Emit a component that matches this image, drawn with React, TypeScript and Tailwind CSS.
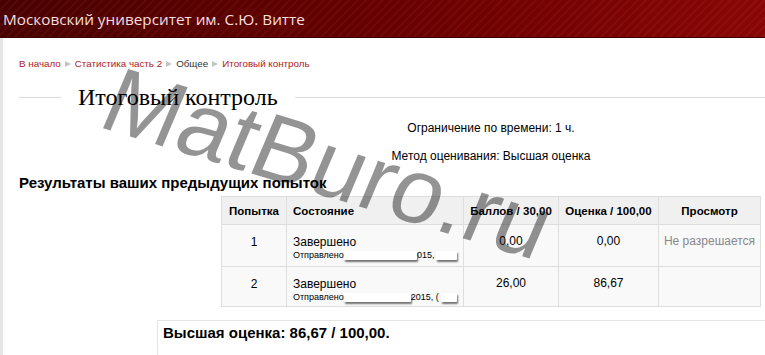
import React from "react";

// ---------------------------------------------------------------------------
// Small pieces
// ---------------------------------------------------------------------------
function Sep() {
  return (
    <span className="mx-[4px] inline-block h-0 w-0 border-y-[3.5px] border-l-[6px] border-y-transparent border-l-[#c4c4c4] align-middle" />
  );
}

function Redact({ w }: { w: number }) {
  return (
    <span
      className="inline-block h-[9px] rounded-[1px] bg-white align-middle shadow-[1px_2px_2px_rgba(0,0,0,0.55)]"
      style={{ width: w }}
    />
  );
}

interface Attempt {
  n: number;
  mid: string;
  w1: number;
  w2: number;
  points: string;
  grade: string;
  review: string;
}

const attempts: Attempt[] = [
  { n: 1, mid: "015,", w1: 78, w2: 22, points: "0,00", grade: "0,00", review: "Не разрешается" },
  { n: 2, mid: "2015, (", w1: 74, w2: 18, points: "26,00", grade: "86,67", review: "" },
];

// ---------------------------------------------------------------------------
// Page
// ---------------------------------------------------------------------------
export default function App() {
  return (
    <div className="relative h-[355px] w-[765px] overflow-hidden bg-white font-['Liberation_Sans',Arial,sans-serif] text-black">
      {/* Header */}
      <div className="relative h-[38px] border-b border-[#3a0000] bg-gradient-to-r from-[#4a0000] via-[#680000] to-[#8a0606]">
        <div className="absolute inset-0 bg-[repeating-linear-gradient(135deg,rgba(255,255,255,0.035)_0px,rgba(255,255,255,0.035)_2px,transparent_2px,transparent_6px)]" />
        <div className="relative pl-[3px] pt-[9px] font-['Open_Sans',sans-serif] text-[15.3px] leading-[20px] text-[#f4dede]">
          Московский университет им. С.Ю. Витте
        </div>
      </div>

      {/* Body */}
      <div className="h-[317px] border-l-[3px] border-[#e6e6e6]">
        {/* Breadcrumb */}
        <div className="pl-[16px] pt-[19px] text-[9.8px] leading-[14px]">
          <span className="text-[#b02020]">В начало</span>
          <Sep />
          <span className="text-[#b02020]">Статистика часть 2</span>
          <Sep />
          <span className="text-[#333]">Общее</span>
          <Sep />
          <span className="text-[#b02020]">Итоговый контроль</span>
        </div>

        {/* Title */}
        <div className="mt-[12px] flex items-center pl-[16px]">
          <div className="h-px w-[42px] bg-[#dcdcdc]" />
          <h2 className="px-[17px] font-['Liberation_Serif',serif] text-[24px] leading-[28px]">
            Итоговый контроль
          </h2>
          <div className="h-px flex-1 bg-[#dcdcdc]" />
        </div>

        {/* Quiz info */}
        <div className="ml-[219px] w-[538px] text-center text-[12px] leading-[14px]">
          <p className="mt-[10px]">Ограничение по времени: 1 ч.</p>
          <p className="mt-[14px]">Метод оценивания: Высшая оценка</p>
        </div>

        {/* Previous attempts */}
        <h3 className="mt-[11px] pl-[16px] text-[15px] font-bold leading-[18px]">
          Результаты ваших предыдущих попыток
        </h3>

        <table className="ml-[218px] mt-[4px] w-[539px] table-fixed border-collapse text-[12px] leading-[14px]">
          <colgroup>
            <col className="w-[65px]" />
            <col className="w-[177px]" />
            <col className="w-[95px]" />
            <col className="w-[100px]" />
            <col className="w-[102px]" />
          </colgroup>
          <thead>
            <tr className="h-[28px] whitespace-nowrap bg-[#f0f0f0] text-[11.5px] font-bold">
              <th className="border border-[#dedede] px-[2px] text-center">Попытка</th>
              <th className="border border-[#dedede] px-[6px] text-left">Состояние</th>
              <th className="border border-[#dedede] px-[2px] text-center">Баллов / 30,00</th>
              <th className="border border-[#dedede] px-[2px] text-center">Оценка / 100,00</th>
              <th className="border border-[#dedede] px-[2px] text-center">Просмотр</th>
            </tr>
          </thead>
          <tbody>
            {attempts.map((a) => (
              <tr key={a.n} className={`${a.n === 1 ? "h-[42px]" : "h-[40px]"} bg-[#f9f9f9] align-top`}>
                <td className="border border-[#dedede] pt-[10px] text-center">{a.n}</td>
                <td className="border border-[#dedede] px-[6px] pt-[10px]">
                  <div>Завершено</div>
                  <div className="flex items-center whitespace-nowrap text-[9px] leading-[12px]">
                    <span>Отправлено</span>
                    <Redact w={a.w1} />
                    <span>{a.mid}</span>
                    <span className="ml-[2px]" />
                    <Redact w={a.w2} />
                  </div>
                </td>
                <td className="border border-[#dedede] pt-[9px] text-center">{a.points}</td>
                <td className="border border-[#dedede] pt-[9px] text-center">{a.grade}</td>
                <td className="whitespace-nowrap border border-[#dedede] pt-[9px] text-center text-[#888]">{a.review}</td>
              </tr>
            ))}
          </tbody>
        </table>

        {/* Feedback */}
        <div className="ml-[154px] mt-[13px] h-[40px] border-l border-t border-[#e4e4e4] pl-[5px] pt-[3px]">
          <p className="text-[15px] font-bold leading-[18px]">Высшая оценка: 86,67 / 100,00.</p>
        </div>
      </div>

      {/* Watermark */}
      <div className="pointer-events-none absolute left-[328px] top-[164px] -translate-x-1/2 -translate-y-1/2 rotate-[17deg] -skew-x-[6deg] whitespace-nowrap font-['Liberation_Sans',Arial,sans-serif] text-[93px] leading-[93px] text-[rgba(0,0,0,0.42)]">
        MatBuro.ru
      </div>
    </div>
  );
}
